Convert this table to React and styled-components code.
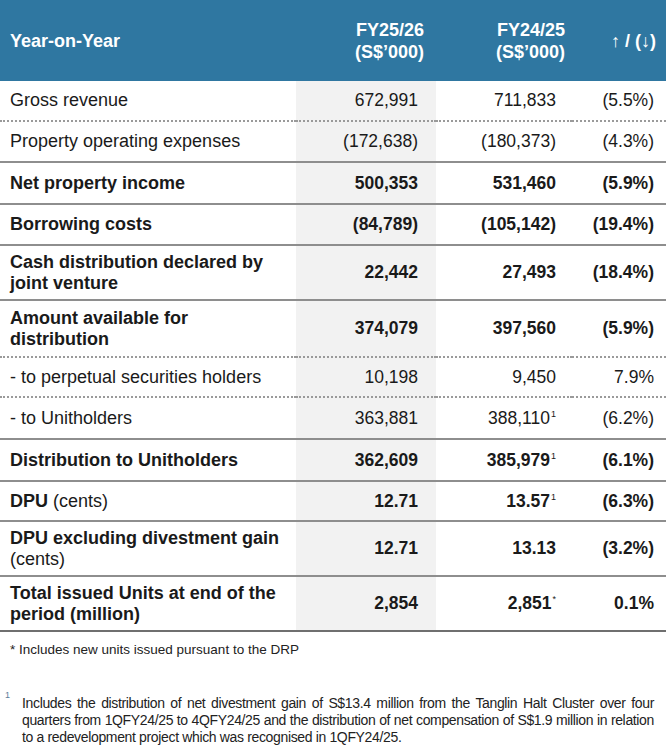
import React from 'react';
import styled, { createGlobalStyle } from 'styled-components';

const GlobalStyle = createGlobalStyle`
    html, body {
        margin: 0;
        padding: 0;
        background: #ffffff;
    }
    body {
        font-family: "Liberation Sans", Arial, sans-serif;
        color: #1a1a1a;
    }
`;

const Page = styled.div`
    width: 666px;
    height: 750px;
    overflow: hidden;
    background: #ffffff;
`;

const Table = styled.div`
    display: grid;
    grid-template-columns: 296px 140px 136px 94px;
`;

const HeadCell = styled.div`
    background: #2f77a1;
    color: #ffffff;
    font-weight: bold;
    font-size: 18px;
    line-height: 22px;
    height: 81px;
    display: flex;
    align-items: center;
    justify-content: ${p => (p.$left ? 'flex-start' : 'flex-end')};
    text-align: ${p => (p.$left ? 'left' : 'right')};
    padding: ${p => (p.$left ? '0 0 0 10px' : `0 ${p.$pr}px 0 0`)};
`;

const Cell = styled.div`
    display: flex;
    align-items: center;
    justify-content: ${p => (p.$label ? 'flex-start' : 'flex-end')};
    min-height: ${p => p.$h}px;
    box-sizing: border-box;
    padding: ${p => (p.$label ? '0 6px 0 10px' : `0 ${p.$pr}px 0 0`)};
    font-size: ${p => (p.$label ? '18px' : '17.5px')};
    line-height: 21px;
    font-weight: ${p => (p.$bold ? 'bold' : 'normal')};
    background: ${p => (p.$shade ? '#f2f2f2' : 'transparent')};
    border-bottom: ${p => (p.$line === 'dotted' ? '2px dotted #9a9a9a' : p.$line === 'last' ? '2px solid #6f6f6f' : '2px solid #8e8e8e')};
`;

const Light = styled.span`
    font-weight: normal;
`;

const Sup = styled.sup`
    font-size: 9px;
    font-weight: normal;
    line-height: 0;
    vertical-align: 7px;
    margin-left: 1px;
`;

const Note = styled.div`
    font-size: 13.5px;
    color: #222;
    padding: 10px 0 0 10px;
`;

const FootNote = styled.div`
    display: flex;
    margin-top: 32px;
    padding: 0 12px 0 5px;
`;

const FootMark = styled.span`
    font-size: 9px;
    color: #5b7d9a;
    width: 17px;
    flex: none;
    line-height: 12px;
`;

const FootText = styled.p`
    margin: 6px 0 0;
    font-size: 14px;
    letter-spacing: -0.35px;
    line-height: 17px;
    text-align: justify;
    color: #222;
`;

const rows = [
    { label: 'Gross revenue', v: ['672,991', '711,833', '(5.5%)'], line: 'dotted', h: 41 },
    { label: 'Property operating expenses', v: ['(172,638)', '(180,373)', '(4.3%)'], line: 'solid', h: 41 },
    { label: 'Net property income', bold: true, v: ['500,353', '531,460', '(5.9%)'], line: 'solid', h: 42 },
    { label: 'Borrowing costs', bold: true, v: ['(84,789)', '(105,142)', '(19.4%)'], line: 'solid', h: 41 },
    { label: 'Cash distribution declared by joint venture', bold: true, v: ['22,442', '27,493', '(18.4%)'], line: 'solid', h: 55 },
    { label: <>Amount available for<br />distribution</>, bold: true, v: ['374,079', '397,560', '(5.9%)'], line: 'dotted', h: 57 },
    { label: '- to perpetual securities holders', v: ['10,198', '9,450', '7.9%'], line: 'dotted', h: 40 },
    { label: '- to Unitholders', v: ['363,881', '388,110', '(6.2%)'], sup: '1', line: 'solid', h: 42 },
    { label: 'Distribution to Unitholders', bold: true, v: ['362,609', '385,979', '(6.1%)'], sup: '1', line: 'solid', h: 42 },
    { label: <>DPU <Light>(cents)</Light></>, bold: true, v: ['12.71', '13.57', '(6.3%)'], sup: '1', line: 'solid', h: 40 },
    { label: <>DPU excluding divestment gain<br /><Light>(cents)</Light></>, bold: true, v: ['12.71', '13.13', '(3.2%)'], line: 'solid', h: 55 },
    { label: <>Total issued Units at end of the<br />period (million)</>, bold: true, v: ['2,854', '2,851', '0.1%'], sup: '*', line: 'last', h: 55 },
];

const pads = [18, 16, 12];

export default function App () {
    return (
        <Page>
            <GlobalStyle />
            <Table>
                <HeadCell $left>Year-on-Year</HeadCell>
                <HeadCell $pr={12}>FY25/26<br />(S$’000)</HeadCell>
                <HeadCell $pr={7}>FY24/25<br />(S$’000)</HeadCell>
                <HeadCell $pr={10}>↑ / (↓)</HeadCell>
                {rows.map((r, i) => (
                    <React.Fragment key={i}>
                        <Cell $label $bold={r.bold} $line={r.line} $h={r.h}>
                            <span>{r.label}</span>
                        </Cell>
                        {r.v.map((val, j) => (
                            <Cell key={j} $bold={r.bold} $line={r.line} $h={r.h} $pr={pads[j]} $shade={j === 0}>
                                <span>
                                    {val}
                                    {j === 1 && r.sup && <Sup>{r.sup}</Sup>}
                                </span>
                            </Cell>
                        ))}
                    </React.Fragment>
                ))}
            </Table>
            <Note>* Includes new units issued pursuant to the DRP</Note>
            <FootNote>
                <FootMark>1</FootMark>
                <FootText>
                    Includes the distribution of net divestment gain of S$13.4 million from the Tanglin Halt Cluster over four
                    quarters from 1QFY24/25 to 4QFY24/25 and the distribution of net compensation of S$1.9 million in relation
                    to a redevelopment project which was recognised in 1QFY24/25.
                </FootText>
            </FootNote>
        </Page>
    );
}
